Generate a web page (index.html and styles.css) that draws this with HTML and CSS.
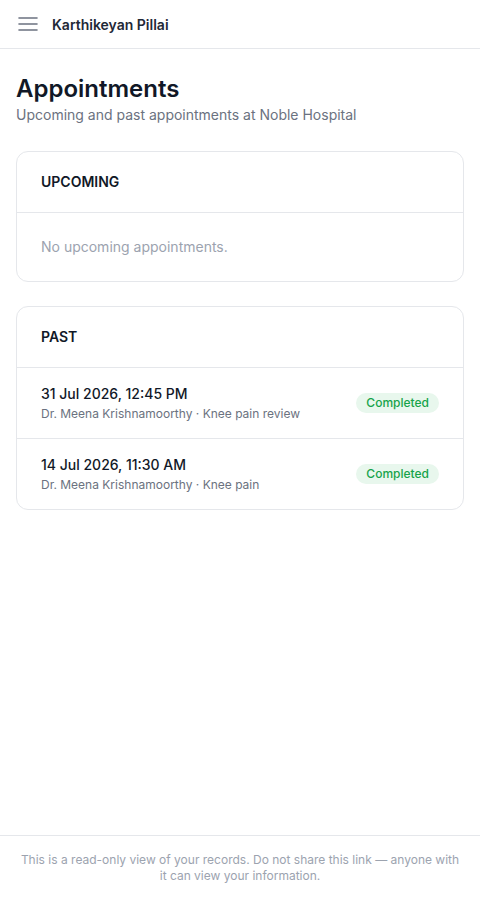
FILE: index.html
```html
<!DOCTYPE html>
<html lang="en">
<head>
<meta charset="utf-8">
<title>Appointments</title>
<link rel="stylesheet" href="styles.css">
</head>
<body>
<div class="page">
  <header class="topbar">
    <button class="menu" aria-label="Menu">
      <svg width="24" height="24" viewBox="0 0 24 24" fill="none" stroke="#6b7280" stroke-width="1.6" stroke-linecap="round"><path d="M3 6h18M3 12h18M3 18h18"/></svg>
    </button>
    <span class="user">Karthikeyan Pillai</span>
  </header>
  <main class="content">
    <h1 class="title">Appointments</h1>
    <p class="subtitle">Upcoming and past appointments at Noble Hospital</p>

    <section class="card">
      <div class="card-head">UPCOMING</div>
      <div class="empty">No upcoming appointments.</div>
    </section>

    <section class="card">
      <div class="card-head">PAST</div>
      <div class="row">
        <div class="info">
          <div class="when">31 Jul 2026, 12:45 PM</div>
          <div class="meta">Dr. Meena Krishnamoorthy · Knee pain review</div>
        </div>
        <span class="badge">Completed</span>
      </div>
      <div class="row">
        <div class="info">
          <div class="when">14 Jul 2026, 11:30 AM</div>
          <div class="meta">Dr. Meena Krishnamoorthy · Knee pain</div>
        </div>
        <span class="badge">Completed</span>
      </div>
    </section>
  </main>
  <footer class="footer">This is a read-only view of your records. Do not share this link — anyone with it can view your information.</footer>
</div>
</body>
</html>
```
FILE: styles.css
```css
* { box-sizing: border-box; }
html, body { margin: 0; padding: 0; }
body {
  font-family: Inter, "Noto Sans", "Liberation Sans", sans-serif;
  color: #111827;
  background: #ffffff;
}
.page {
  min-height: 100vh;
  display: flex;
  flex-direction: column;
}
.topbar {
  height: 49px;
  display: flex;
  align-items: center;
  gap: 12px;
  padding: 0 16px;
  border-bottom: 1px solid #e5e7eb;
}
.menu {
  display: flex;
  padding: 0;
  border: 0;
  background: none;
  width: 24px;
  height: 24px;
}
.user {
  font-size: 14px;
  font-weight: 600;
  color: #1f2937;
}
.content {
  flex: 1;
  padding: 24px 16px;
}
.title {
  margin: 0;
  font-size: 24px;
  line-height: 32px;
  font-weight: 600;
  color: #111827;
}
.subtitle {
  margin: 0 0 26px;
  font-size: 14px;
  line-height: 20px;
  color: #6b7280;
}
.card {
  border: 1px solid #e5e7eb;
  border-radius: 12px;
  margin-bottom: 24px;
  overflow: hidden;
}
.card-head {
  padding: 20px 24px;
  font-size: 14px;
  line-height: 20px;
  font-weight: 600;
  color: #111827;
  border-bottom: 1px solid #e5e7eb;
}
.empty {
  padding: 24px;
  font-size: 14px;
  line-height: 20px;
  color: #9ca3af;
}
.row {
  display: flex;
  align-items: center;
  justify-content: space-between;
  padding: 16px 24px;
  border-bottom: 1px solid #e5e7eb;
}
.row:last-child { border-bottom: 0; }
.when {
  font-size: 14px;
  line-height: 20px;
  font-weight: 500;
  color: #111827;
}
.meta {
  margin-top: 2px;
  font-size: 12px;
  line-height: 16px;
  color: #6b7280;
}
.badge {
  height: 20px;
  padding: 0 10px;
  border-radius: 999px;
  background: #e8f7ed;
  color: #16a34a;
  font-size: 12px;
  line-height: 20px;
  font-weight: 500;
}
.footer {
  border-top: 1px solid #e5e7eb;
  padding: 16px;
  text-align: center;
  font-size: 12px;
  line-height: 16px;
  color: #9ca3af;
}
```
